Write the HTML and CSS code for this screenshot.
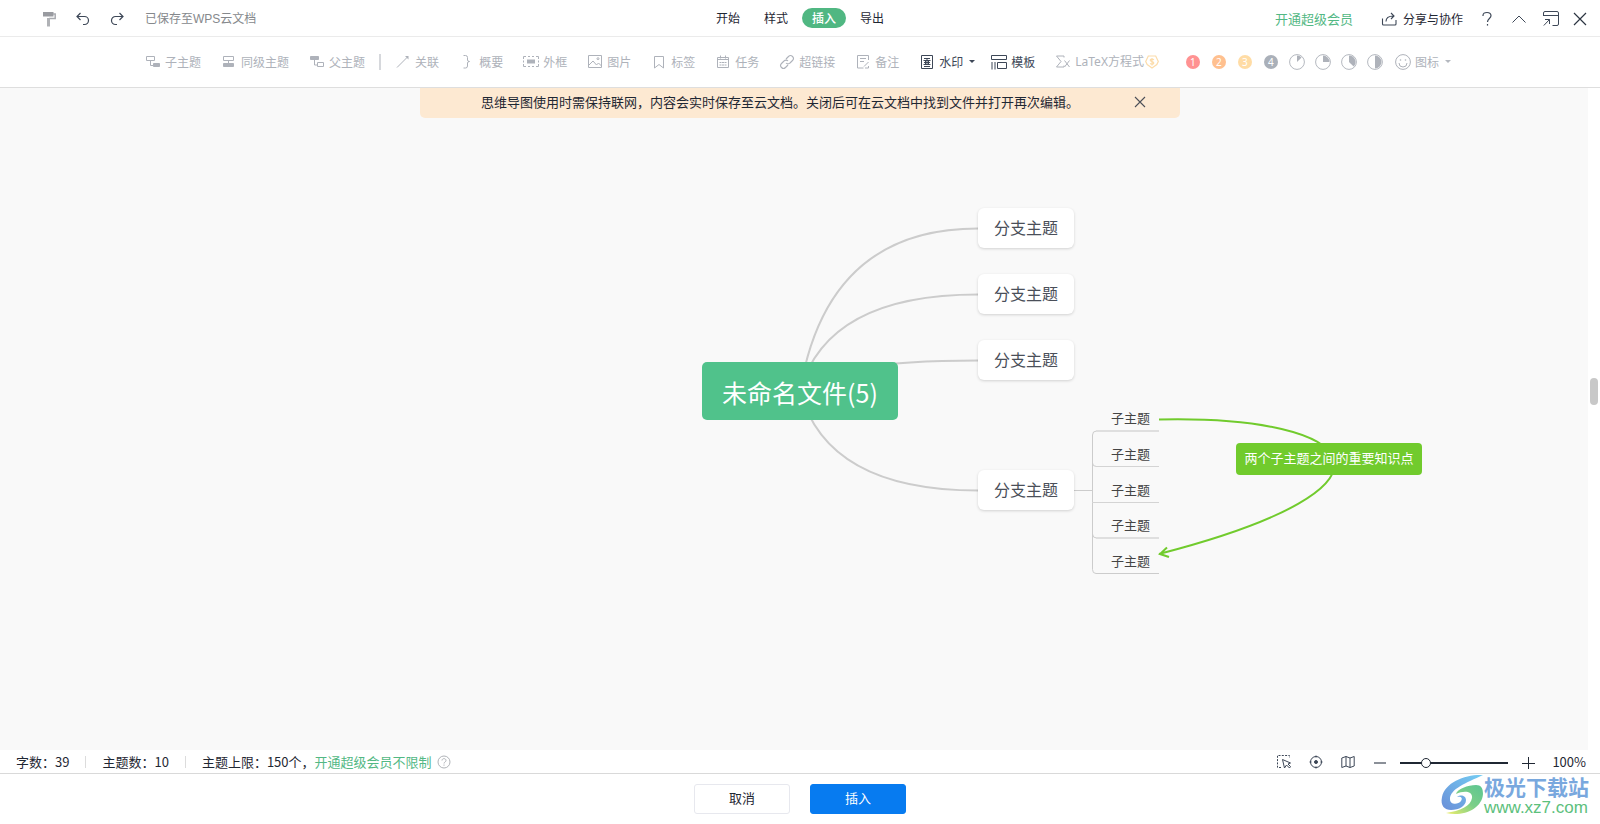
FILE: index.html
```html
<!DOCTYPE html>
<html lang="zh-CN">
<head>
<meta charset="utf-8">
<title>思维导图</title>
<link rel="stylesheet" href="styles.css">
</head>
<body>
<div class="app">
  <header class="header">
    <div class="header-left">
      <button class="icon-btn" aria-label="格式刷"><svg width="16" height="16" viewBox="0 0 16 16"><path d="M2 1h10.500v4.500H2z" fill="#999ba0"/><path d="M12 3h2.200v4.500H8" fill="none" stroke="#a9abb0" stroke-width="1.500"/><path d="M6 7h3v8.500H6z" fill="#b0b2b6"/></svg></button>
      <button class="icon-btn" aria-label="撤销"><svg width="16" height="16" viewBox="0 0 16 16" fill="none" stroke="#3d4757" stroke-width="1.200"><path d="M5.500 2 2 5.500 5.500 9M2 5.500h7.500a4 4 0 0 1 0 8H8"/></svg></button>
      <button class="icon-btn" aria-label="恢复"><svg width="16" height="16" viewBox="0 0 16 16" fill="none" stroke="#3d4757" stroke-width="1.200"><path d="M10.500 2 14 5.500 10.500 9M14 5.500H6.500a4 4 0 0 0 0 8H8"/></svg></button>
      <span class="saved">已保存至WPS云文档</span>
    </div>
    <nav class="tabs">
      <button class="tab">开始</button>
      <button class="tab">样式</button>
      <button class="tab tab-active">插入</button>
      <button class="tab">导出</button>
    </nav>
    <div class="header-right">
      <a class="member" href="#">开通超级会员</a>
      <button class="share"><svg width="16" height="16" viewBox="0 0 16 16" fill="none" stroke="#3d4757" stroke-width="1.100"><path d="M1.500 7.500V13a1 1 0 0 0 1 1h11.500a1 1 0 0 0 1-1V9"/><path d="M5 10.500C5 6.500 8 5 12.500 5M10 2l3 3-3 3"/></svg>分享与协作</button>
      <button class="icon-btn" aria-label="帮助"><svg width="16" height="16" viewBox="0 0 16 16" fill="none" stroke="#3d4757" stroke-width="1.200"><path d="M4 5V4.500C4 2.500 5.500 1.500 8 1.500s4 1.200 4 3.200C12 7.500 8.500 7.500 8.500 11"/><path d="M8.500 13v1.600"/></svg></button>
      <button class="icon-btn" aria-label="收起"><svg width="16" height="16" viewBox="0 0 16 16" fill="none" stroke="#3d4757"><path d="M1.500 11.500 8 5l6.500 6.500"/></svg></button>
      <div class="window-tools">
        <button class="icon-btn" aria-label="弹出"><svg width="16" height="16" viewBox="0 0 16 16" fill="none" stroke="#3d4757"><path d="M.500 5V2q0-1.500 1.500-1.500h12q1.500 0 1.500 1.500v11q0 1.500-1.500 1.500H9.500M.500 4.500h15M2 8.500h4.500v4.500M6.500 8.500.800 14.500"/></svg></button>
        <button class="icon-btn" aria-label="关闭"><svg width="16" height="16" viewBox="0 0 16 16" fill="none" stroke="#2c3542" stroke-width="1.200"><path d="m2 2 12 12M14 2 2 14"/></svg></button>
      </div>
    </div>
  </header>

  <div class="toolbar">
    <div class="group">
      <button class="tool" disabled><svg width="16" height="16" viewBox="0 0 16 16" fill="none" stroke="#aeb2ba"><path d="M1.500 2.500h8v4h-8zM5.500 6.500v5H9"/><path d="M8.500 9.500h6v3h-6z" fill="#aeb2ba"/></svg>子主题</button>
      <button class="tool" disabled><svg width="16" height="16" viewBox="0 0 16 16" fill="none" stroke="#aeb2ba"><path d="M2.500 2.500h10v4h-10zM7.500 6.500v3"/><path d="M2.500 9.500h10v3h-10z" fill="#aeb2ba"/></svg>同级主题</button>
      <button class="tool" disabled><svg width="16" height="16" viewBox="0 0 16 16" fill="none" stroke="#aeb2ba"><path d="M1.500 2.500h8v3h-8z" fill="#aeb2ba"/><path d="M5.500 6v5H8M8.500 8.500h6v4h-6z"/></svg>父主题</button>
    </div>
    <span class="divider"></span>
    <div class="group">
      <button class="tool" disabled><svg width="16" height="16" viewBox="0 0 16 16" fill="none" stroke="#aeb2ba"><path d="M2 13.500 12.500 3"/><path d="M13.500 2v3.500L10 2z" fill="#aeb2ba" stroke="none"/></svg>关联</button>
      <button class="tool" disabled><svg width="16" height="16" viewBox="0 0 16 16" fill="none" stroke="#aeb2ba"><path d="M4.500 1.500h2q2 0 2 2v2.500q0 1.500 2 1.500-2 0-2 1.500v3q0 2-2 2h-2"/></svg>概要</button>
      <button class="tool" disabled><svg width="16" height="16" viewBox="0 0 16 16" fill="none" stroke="#aeb2ba"><path d="M.500 5V2.500H3M5 2.500h2M9 2.500h2M13 2.500h2.500V5M15.500 6.500v2M15.500 10v2.500H13M11 12.500H9M7 12.500H5M3 12.500H.500V10M.500 8.500v-2"/><path d="M4 5.500h8v4H4z" fill="#aeb2ba" stroke="none"/></svg>外框</button>
      <button class="tool" disabled><svg width="16" height="16" viewBox="0 0 16 16" fill="none" stroke="#aeb2ba"><path d="M1.500 1.500h13v12h-13zM2 11l4-4 3.500 4 2-2 3 3"/><circle cx="11" cy="4.700" r="1"/></svg>图片</button>
      <button class="tool" disabled><svg width="16" height="16" viewBox="0 0 16 16" fill="none" stroke="#aeb2ba"><path d="M3.500 2.500h9v11.500L8 10.500 3.500 14z"/></svg>标签</button>
      <button class="tool" disabled><svg width="16" height="16" viewBox="0 0 16 16" fill="none" stroke="#aeb2ba"><path d="M2.500 3.500h11v10h-11zM2.500 5.500h11M5.500 1.500v3M10.500 1.500v3"/><path d="M4.500 8.500h7M4.500 11h7" stroke-dasharray="2 .500"/></svg>任务</button>
      <button class="tool" disabled><svg width="16" height="16" viewBox="0 0 16 16" fill="none" stroke="#aeb2ba" stroke-width="1.100"><path d="m7 5 2.500-2.500a2.700 2.700 0 0 1 4 4L11 9a2.700 2.700 0 0 1-4 0M9 11l-2.500 2.500a2.700 2.700 0 0 1-4-4L5 7a2.700 2.700 0 0 1 4 0"/></svg>超链接</button>
      <button class="tool" disabled><svg width="16" height="16" viewBox="0 0 16 16" fill="none" stroke="#aeb2ba"><path d="M13.500 6V1.500h-11v12.500h6M5 4.500h6M5 7.500h4M9 12.500l4.500-4.500M10 14h3.500v-2"/></svg>备注</button>
      <button class="tool tool-on tool-menu"><svg width="16" height="16" viewBox="0 0 16 16" fill="none" stroke="#3d4757"><path d="M2.500 1.500h11v13h-11z"/><path d="M5 4.500h6M4.500 6.500h7M5 8.500h6M4.500 10.500h7M8 4v7M6.500 6v4M9.500 6v4M5 12.500h6"/></svg>水印<svg class="caret" width="8" height="6" viewBox="0 0 8 6"><path d="M2 1h6L5 4z" fill="#3d4757"/></svg></button>
      <button class="tool tool-on"><svg width="16" height="16" viewBox="0 0 16 16" fill="none" stroke="#3d4757"><path d="M.500 1.500h15v4H.500zM1 8v7.500M4 8v7.500M6.500 8.500h9v6h-9z"/></svg>模板</button>
      <button class="tool" disabled><svg width="16" height="16" viewBox="0 0 16 16" fill="none" stroke="#aeb2ba"><path d="M9 3.500V2H1.500l4.500 5.500L1.500 13H9v-1.500M9.500 6.500l5 6.500M14.500 6.500l-5 6.500"/></svg><span class="latex">LaTeX方程式<svg width="14" height="14" viewBox="0 0 14 14" fill="none" stroke="#fcdcaa" stroke-width="1.200"><path d="M3.300 1h7.400l2.600 5.500-1.500 3L7 13 2.200 9.500.700 6.500z"/><path d="M9 4.700C7.500 3.700 5.200 4 5.200 5.300 5.200 7 8.800 6.200 8.800 8 8.800 9.300 6.500 9.600 5 8.600M7 3v7.500"/></svg></span></button>
    </div>
    <div class="markers">
      <button class="marker" disabled aria-label="优先级 1"><span class="num num-1">1</span></button>
      <button class="marker" disabled aria-label="优先级 2"><span class="num num-2">2</span></button>
      <button class="marker" disabled aria-label="优先级 3"><span class="num num-3">3</span></button>
      <button class="marker" disabled aria-label="优先级 4"><span class="num num-4">4</span></button>
      <button class="marker" disabled aria-label="进度 1/8"><svg width="16" height="16" viewBox="0 0 16 16"><circle cx="8" cy="8" r="7.400" fill="none" stroke="#b4b8bf"/><path d="M8 8V1.500a6.500 6.500 0 0 1 4.600 1.900z" fill="#aeb2ba"/></svg></button>
      <button class="marker" disabled aria-label="进度 1/4"><svg width="16" height="16" viewBox="0 0 16 16"><circle cx="8" cy="8" r="7.400" fill="none" stroke="#b4b8bf"/><path d="M8 8V1.500A6.500 6.500 0 0 1 14.500 8z" fill="#aeb2ba"/></svg></button>
      <button class="marker" disabled aria-label="进度 3/8"><svg width="16" height="16" viewBox="0 0 16 16"><circle cx="8" cy="8" r="7.400" fill="none" stroke="#b4b8bf"/><path d="M8 8V1.500A6.500 6.500 0 0 1 12.600 12.600z" fill="#aeb2ba"/></svg></button>
      <button class="marker" disabled aria-label="进度 1/2"><svg width="16" height="16" viewBox="0 0 16 16"><circle cx="8" cy="8" r="7.400" fill="none" stroke="#b4b8bf"/><path d="M8 14.500V1.500a6.500 6.500 0 0 1 0 13z" fill="#aeb2ba"/></svg></button>
    </div>
    <button class="tool" disabled><svg width="16" height="16" viewBox="0 0 16 16" fill="none" stroke="#aeb2ba"><circle cx="8" cy="8" r="7.400"/><path d="M4 9a4 4 0 0 0 8 0"/><circle cx="5.500" cy="6" r=".800" fill="#aeb2ba" stroke="none"/><circle cx="10.500" cy="6" r=".800" fill="#aeb2ba" stroke="none"/></svg>图标<svg class="caret" width="8" height="6" viewBox="0 0 8 6"><path d="M2 1h6L5 4z" fill="#b4b8bf"/></svg></button>
  </div>

  <main class="canvas">
    <div class="banner">
      <span>思维导图使用时需保持联网，内容会实时保存至云文档。关闭后可在云文档中找到文件并打开再次编辑。</span>
      <button class="icon-btn" aria-label="关闭提示"><svg width="12" height="12" viewBox="0 0 12 12" fill="none" stroke="#4c5058" stroke-width="1.100"><path d="m1 1 10 10M11 1 1 11"/></svg></button>
    </div>
    <div class="map">
      <svg class="links" width="722" height="370" viewBox="702 208 722 370" fill="none">
        <g stroke="#ccc" stroke-width="2">
          <path d="M800 391Q827 228.500 978 228.500"/>
          <path d="M800 391Q827 294.500 978 294.500"/>
          <path d="M800 391Q827 360.500 978 360.500"/>
          <path d="M800 391Q827 490.500 978 490.500"/>
        </g>
        <g stroke="#ccc">
          <path d="M1074 490.500h18M1159 573.500h-63q-3.500 0-3.500-4V435q0-4 4-4"/>
          <path d="M1092.500 463q0 3.500 4 3.500M1092.500 534q0 4 4 4"/>
        </g>
        <g stroke="#dfdfdf" stroke-width="2"><path d="M1096 431h63M1096 538h63"/></g>
        <g stroke="#d4d4d4"><path d="M1096 466.500h63M1092 502.500h67"/></g>
        <g stroke="#71cb2d" stroke-width="2"><path d="M1159 419.500C1362 415 1422 486 1159 554M1167 547.500l-7 6.500 9 3"/></g>
      </svg>
      <div class="node root">未命名文件(5)</div>
      <div class="node branch b1">分支主题</div>
      <div class="node branch b2">分支主题</div>
      <div class="node branch b3">分支主题</div>
      <div class="node branch b4">分支主题</div>
      <div class="leaf l1">子主题</div>
      <div class="leaf l2">子主题</div>
      <div class="leaf l3">子主题</div>
      <div class="leaf l4">子主题</div>
      <div class="leaf l5">子主题</div>
      <div class="node relation">两个子主题之间的重要知识点</div>
    </div>
    <div class="scrollbar"><span class="scroll-thumb"></span></div>
  </main>

  <div class="status">
    <div class="status-left">
      <span>字数：39</span><span class="sep"></span>
      <span>主题数：10</span><span class="sep"></span>
      <span>主题上限：150个，<a class="limit" href="#">开通超级会员不限制</a></span>
      <button class="icon-btn hint" aria-label="说明"><svg width="14" height="14" viewBox="0 0 14 14" fill="none" stroke="#b0b3b8"><circle cx="7" cy="7" r="6"/><path d="M5 5.500C5 3 9 3 9 5.500 9 7 7 7 7 8.500M7 9.500v1.200"/></svg></button>
    </div>
    <div class="status-right">
      <div class="view-tools">
        <button class="icon-btn" aria-label="框选"><svg width="14" height="14" viewBox="0 0 14 14" fill="none" stroke="#3d4757"><path d="M4 12.500H.500V.500h12V3" stroke-dasharray="2 1.300"/><path d="m5.500 4.500 2 8.500 2-3 3 3 1-1.500-2.500-2.500L13.500 8z"/></svg></button>
        <button class="icon-btn" aria-label="定位中心"><svg width="14" height="14" viewBox="0 0 14 14" fill="none" stroke="#3d4757"><circle cx="7" cy="7" r="5.500"/><circle cx="7" cy="7" r="1.500" fill="#3d4757"/><path d="M7 .500v2M7 11.500v2M.500 7h2M11.500 7h2"/></svg></button>
        <button class="icon-btn" aria-label="导航"><svg width="14" height="14" viewBox="0 0 14 14" fill="none" stroke="#3d4757"><path d="M.800 3 5 1.500l4 1.500 4.200-1.500V11L9 12.500 5 11 .800 12.500zM5 1.500V11M9 3v9.500"/></svg></button>
        <button class="icon-btn" aria-label="缩小"><svg width="14" height="14" viewBox="0 0 14 14"><path d="M1 7h12v2H1z" fill="#8b9098"/></svg></button>
      </div>
      <input class="zoom" type="range" min="0" max="100" value="21" aria-label="缩放">
      <button class="icon-btn" aria-label="放大"><svg width="14" height="14" viewBox="0 0 14 14" fill="none" stroke="#1f2733"><path d="M7.500 2v12M1 8.500h13"/></svg></button>
      <span class="percent">100%</span>
    </div>
  </div>

  <footer class="footer">
    <button class="btn">取消</button>
    <button class="btn btn-primary">插入</button>
    <div class="site-mark">
      <svg width="44" height="42" viewBox="0 0 44 42">
        <defs>
          <linearGradient id="blue" x1="0" y1="1" x2="1" y2="0"><stop offset="0" stop-color="#6a8fd8"/><stop offset="1" stop-color="#74cdf3"/></linearGradient>
          <linearGradient id="green" x1="0" y1="1" x2="1" y2="0"><stop offset="0" stop-color="#f0ee6a"/><stop offset=".5" stop-color="#7ccf88"/><stop offset="1" stop-color="#5cc592"/></linearGradient>
        </defs>
        <path d="M43 1C26 0 5 8 2 23c-2 9 3 13 9 13 8 0 15-4 15-10 0-4-5-6-9-3 4-1 6 1 4 4-3 4-11 4-11-2C10 15 26 9 43 1z" fill="url(#blue)"/>
        <path d="M36 11c-8 0-19 4-20 9 8-4 17-3 16 4-1 8-12 13-26 15 17 4 36-4 37-19 0-6-2-9-7-9z" fill="url(#green)"/>
      </svg>
      <div class="site-text"><span class="site-name">极光下载站</span><span class="site-url">www.xz7.com</span></div>
    </div>
  </footer>
</div>
</body>
</html>
```
FILE: styles.css
```css
* { box-sizing: border-box; }
body {
  margin: 0;
  background: #fff;
  color: #1f2733;
  font: 13px/20px "Noto Sans CJK SC", sans-serif;
}
button {
  margin: 0;
  padding: 0;
  border: 0;
  background: none;
  color: inherit;
  font: inherit;
  white-space: nowrap;
}
a { color: #53b884; text-decoration: none; }
svg { display: block; flex: none; }
.app { display: flex; flex-direction: column; min-height: 100vh; }
.icon-btn { display: flex; align-items: center; justify-content: center; }

.header {
  display: grid;
  grid-template-columns: 1fr auto 1fr;
  align-items: center;
  height: 37px;
  border-bottom: 1px solid #ebebeb;
  font-size: 12px;
}
.header-left { display: flex; align-items: center; gap: 18px; padding: 1px 0 0 41px; }
.saved {
  padding-left: 2px;
  color: #85888c;
  font-family: "Liberation Sans", "Noto Sans CJK SC", sans-serif;
}
.tabs { display: flex; gap: 4px; }
.tab { height: 20px; padding: 0 10px; border-radius: 10px; }
.tab-active { background: #50b782; color: #fff; font-weight: 500; }
.header-right {
  display: flex;
  align-items: center;
  justify-content: flex-end;
  gap: 16px;
  padding: 2px 12px 0 0;
}
.member { margin-right: 12px; font-size: 13px; }
.share { display: flex; align-items: center; gap: 6px; }
.window-tools { display: flex; gap: 13px; }

.toolbar {
  display: flex;
  align-items: center;
  justify-content: center;
  height: 51px;
  padding-right: 4px;
  border-bottom: 1px solid #dedede;
  font-size: 12px;
}
.group { display: flex; gap: 20px; }
.divider { width: 2px; height: 16px; margin: 0 14px; background: #d6d8dc; }
.tool { display: flex; align-items: center; gap: 4px; color: #aeb2ba; }
.tool-on { color: #3d4757; }
.tool-menu { margin-right: -4px; }
.latex { display: flex; align-items: center; gap: 1px; font-family: "Noto Sans", "Noto Sans CJK SC", sans-serif; }
.markers { display: flex; gap: 10px; margin: 0 12px 0 26px; }
.marker { display: flex; align-items: center; justify-content: center; width: 16px; height: 16px; }
.num {
  width: 14px;
  height: 14px;
  border-radius: 50%;
  color: #fff;
  font: 10px/14px "Noto Sans", sans-serif;
  text-align: center;
}
.num-1 { background: #ff9292; }
.num-2 { background: #ffc08f; }
.num-3 { background: #ffdca5; }
.num-4 { background: #aab0b9; }

.canvas {
  position: relative;
  display: flex;
  flex: 1;
  align-items: flex-start;
  justify-content: center;
  min-height: 520px;
  overflow: hidden;
  background: #f9f9f9;
}
.banner {
  display: flex;
  align-items: center;
  justify-content: space-between;
  width: 760px;
  height: 30px;
  padding: 0 34px 2px 61px;
  border-radius: 0 0 5px 5px;
  background: #fde9d2;
}
.map { position: absolute; top: 120px; left: calc(50% - 98px); width: 722px; height: 370px; }
.links { position: absolute; top: 0; left: 0; }
.node, .leaf { position: absolute; white-space: nowrap; text-align: center; }
.root {
  top: 154px;
  left: 0;
  width: 196px;
  height: 58px;
  border-radius: 5px;
  background: #50c28b;
  color: #fff;
  font-size: 25px;
  line-height: 60px;
}
.branch {
  left: 276px;
  width: 96px;
  height: 40px;
  border-radius: 6px;
  background: #fff;
  box-shadow: 0 1px 3px rgba(0, 0, 0, .16);
  color: #4a4f59;
  font-size: 16px;
  line-height: 38px;
}
.b1 { top: 0; }
.b2 { top: 66px; }
.b3 { top: 132px; }
.b4 { top: 262px; }
.leaf { left: 409px; color: #444; }
.l1 { top: 200px; }
.l2 { top: 236px; }
.l3 { top: 272px; }
.l4 { top: 307px; }
.l5 { top: 343px; }
.relation {
  top: 235px;
  left: 534px;
  width: 186px;
  height: 32px;
  border-radius: 4px;
  background: #71cb2d;
  color: #fff;
  line-height: 30px;
}
.scrollbar {
  position: absolute;
  inset: 0 0 0 auto;
  width: 12px;
  padding: 290px 2px 0;
  background: #fff;
}
.scroll-thumb { display: block; height: 27px; border-radius: 4px; background: #c8c8c8; }

.status {
  display: flex;
  align-items: center;
  justify-content: space-between;
  height: 24px;
  padding: 0 14px 0 16px;
  border-bottom: 1px solid #d9d9d9;
}
.status-left { display: flex; align-items: center; gap: 16px; }
.sep { width: 1px; height: 12px; background: #dcdcdc; }
.hint { margin-left: -11px; }
.status-right { display: flex; align-items: center; gap: 13px; }
.view-tools { display: flex; gap: 18px; }
.percent { margin-left: 4px; font-size: 13px; }
.zoom { width: 108px; height: 12px; margin: 2px 0 0; appearance: none; background: none; }
.zoom::-webkit-slider-runnable-track { height: 2px; background: #1f2733; }
.zoom::-webkit-slider-thumb {
  width: 10px;
  height: 10px;
  margin-top: -4px;
  border: 1px solid #1f2733;
  border-radius: 50%;
  appearance: none;
  background: #fff;
}

.footer {
  position: relative;
  display: flex;
  align-items: center;
  justify-content: center;
  gap: 20px;
  height: 50px;
}
.btn { width: 96px; height: 30px; padding-bottom: 2px; border: 1px solid #e7e8ee; border-radius: 3px; }
.btn-primary { border-color: #077bf0; background: #077bf0; color: #fff; }
.site-mark { position: absolute; top: 0; right: 11px; display: flex; }
.site-text { display: flex; flex-direction: column; }
.site-name { color: #79a8de; font-size: 21px; font-weight: 700; line-height: 24px; }
.site-url { color: #5cc07c; font: 17px/20px "Liberation Sans", sans-serif; }
```
